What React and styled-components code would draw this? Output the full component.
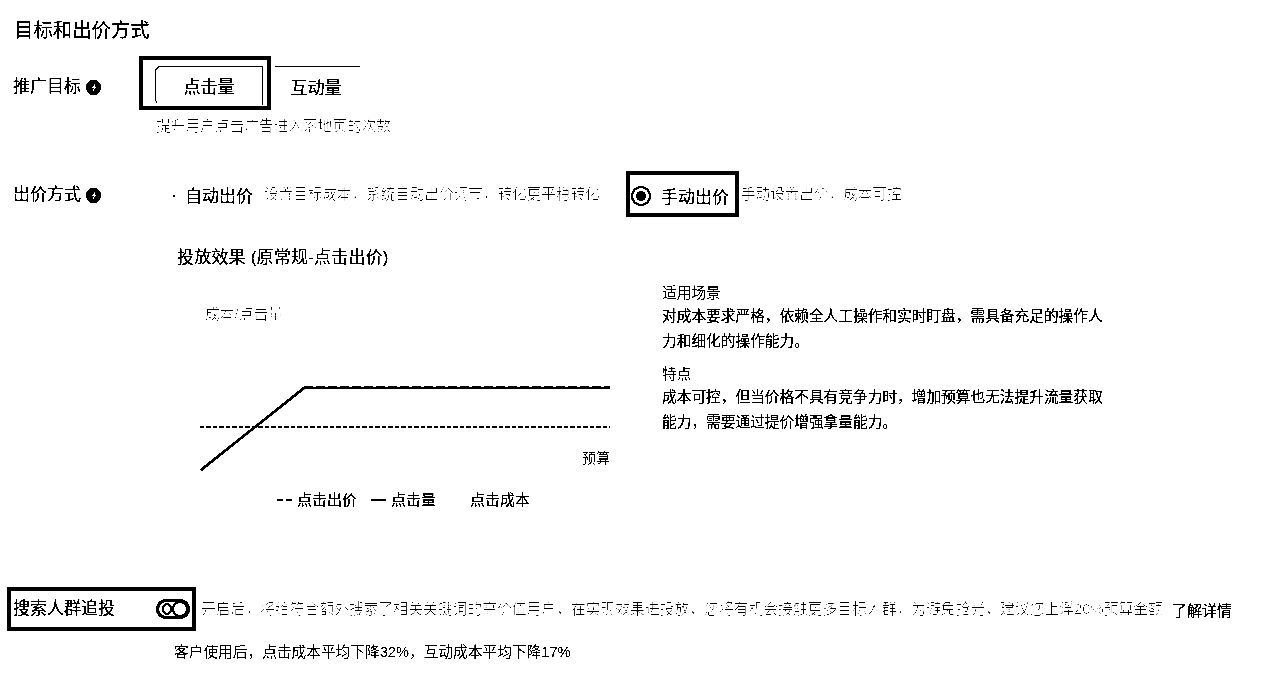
import React from 'react';
import styled, { createGlobalStyle } from 'styled-components';

const GlobalStyle = createGlobalStyle`
  html, body {
    margin: 0;
    padding: 0;
    background: #fff;
  }
  body {
    font-family: "Liberation Sans", "Noto Sans CJK SC", sans-serif;
    color: #000;
  }
`;

// the reference is a 1-bit scan, so push everything to black or white
const Page = styled.div`
  width: 1280px;
  height: 699px;
  box-sizing: border-box;
  padding-top: 18px;
  overflow: hidden;
  background: #fff;
  filter: grayscale(1) brightness(0.75) contrast(30);
`;

const Title = styled.h2`
  margin: 0 0 0 14px;
  font-size: 19.4px;
  font-weight: 400;
  line-height: 24px;
`;

const GoalRow = styled.div`
  display: flex;
  align-items: flex-start;
  margin-top: 14px;
  padding-left: 13px;
`;

const Label = styled.div`
  display: flex;
  align-items: center;
  gap: 5px;
  width: 126px;
  flex: none;
  font-size: 17px;
  line-height: 24px;
  padding-top: ${(p) => p.$top || 0}px;
`;

const InfoIcon = () => (
  <svg width="15" height="15" viewBox="0 0 15 15">
    <circle cx="7.5" cy="7.5" r="7.5" fill="#000" />
    <path d="M9.8 2.5 5.8 8h2L6.2 12.8 10.6 6.6H8.6z" fill="#fff" />
  </svg>
);

const Highlight = styled.div`
  box-sizing: border-box;
  border: 4px solid #000;
  flex: none;
`;

const TabHighlight = styled(Highlight)`
  width: 132px;
  height: 54px;
  padding: 6px 4px 1px 12px;
`;

const ActiveTab = styled.div`
  box-sizing: border-box;
  height: 39px;
  display: flex;
  align-items: center;
  justify-content: center;
  border: 1px solid #000;
  border-bottom-color: transparent;
  border-radius: 6px 0 0 6px;
  font-size: 17px;
`;

const Tab = styled.div`
  box-sizing: border-box;
  width: 85px;
  height: 39px;
  margin: 10px 0 0 4px;
  padding-right: 3px;
  display: flex;
  align-items: center;
  justify-content: center;
  border-top: 1px solid #000;
  font-size: 17px;
`;

const Helper = styled.div`
  margin: 6px 0 0 156px;
  font-size: 14.7px;
  line-height: 20px;
  color: #a3a3a3;
`;

const BidRow = styled.div`
  display: flex;
  align-items: center;
  margin-top: 35px;
  padding-left: 13px;
  height: 46px;
  white-space: nowrap;
`;

const RadioSpeck = styled.span`
  flex: none;
  width: 2px;
  height: 2px;
  margin: 3px 0 0 34px;
  background: #000;
`;

const AutoOption = styled.div`
  margin-left: 10px;
  font-size: 17px;
  width: 68px;
  flex: none;
`;

const Faint = styled.div`
  flex: none;
  font-size: ${(p) => p.$size || 14.6}px;
  color: #a3a3a3;
  margin-left: ${(p) => p.$left}px;
  width: ${(p) => (p.$width ? `${p.$width}px` : 'auto')};
  line-height: 20px;
`;

const BidHighlight = styled(Highlight)`
  width: 113px;
  height: 46px;
  display: flex;
  align-items: center;
  gap: 10px;
  padding: 3px 0 0 1px;
  font-size: 17px;
`;

const Radio = styled.span`
  box-sizing: border-box;
  width: 20px;
  height: 20px;
  flex: none;
  border: 2px solid #000;
  border-radius: 50%;
  display: flex;
  align-items: center;
  justify-content: center;
  &::after {
    content: '';
    width: 10px;
    height: 10px;
    border-radius: 50%;
    background: #000;
  }
`;

const EffectTitle = styled.div`
  margin: 29px 0 0 177px;
  font-size: 17px;
  font-weight: 400;
  letter-spacing: 0.2px;
  line-height: 24px;
`;

const ChartRow = styled.div`
  display: flex;
  align-items: flex-start;
  margin-top: 12px;
  padding-left: 200px;
`;

const ChartCol = styled.div`
  width: 410px;
  flex: none;
  padding-top: 18px;
`;

const ChartSvg = styled.svg`
  display: block;
`;

const Legend = styled.div`
  display: flex;
  margin: 8px 0 0 77px;
  font-size: 15px;
  line-height: 24px;
`;

const LegendItem = styled.div`
  display: flex;
  align-items: center;
  gap: 5px;
  margin-right: 14px;
`;

const Swatch = styled.span`
  width: 15px;
  height: 0;
  border-top: 2px ${(p) => p.$line} ${(p) => p.$color || '#000'};
`;

const Notes = styled.div`
  margin-left: 52px;
  width: 446px;
  font-size: 14.7px;
`;

const NoteHead = styled.div`
  line-height: 22px;
  margin-top: ${(p) => p.$top || 0}px;
  color: #555;
`;

const NoteBody = styled.p`
  margin: 0;
  line-height: 25px;
  font-weight: 400;
`;

const SearchRow = styled.div`
  display: flex;
  align-items: center;
  margin-top: 75px;
  padding-left: 7px;
  white-space: nowrap;
`;

const SearchHighlight = styled(Highlight)`
  width: 189px;
  height: 44px;
  display: flex;
  align-items: center;
  justify-content: space-between;
  padding: 0 2px 5px 2px;
  font-size: 17px;
`;

const Toggle = styled.span`
  box-sizing: border-box;
  position: relative;
  width: 34px;
  height: 20px;
  margin-top: 5px;
  border: 3px solid #000;
  border-radius: 10px;
  background: #fff;
  &::after {
    content: '';
    position: absolute;
    right: -1px;
    top: -1px;
    width: 16px;
    height: 16px;
    border-radius: 50%;
    border: 2px solid #000;
    box-sizing: border-box;
    background: #fff;
  }
  &::before {
    content: '';
    position: absolute;
    left: 3px;
    top: 1px;
    width: 10px;
    height: 12px;
    border-radius: 50%;
    border: 2px solid #000;
    box-sizing: border-box;
  }
`;

const MoreLink = styled.span`
  flex: none;
  margin-left: 10px;
  font-size: 15px;
`;

const Benefit = styled.div`
  margin: 11px 0 0 174px;
  font-size: 14.7px;
  line-height: 20px;
  color: #555;
`;

const BidChart = () => (
  <ChartSvg width="410" height="180" viewBox="0 0 410 180">
    <path d="M1 170 104 88H410" fill="none" stroke="#000" strokeWidth="2.5" />
    <path d="M104 87H410" fill="none" stroke="#000" strokeWidth="2" strokeDasharray="9 3" />
    <path d="M0 127H410" fill="none" stroke="#000" strokeWidth="2" strokeDasharray="4 2.5" />
    <text x="5" y="19" fontSize="14.8" fill="#a3a3a3">成本/点击量</text>
    <text x="382" y="163" fontSize="14" fill="#777">预算</text>
  </ChartSvg>
);

export default function App() {
  return (
    <Page>
      <GlobalStyle />
      <Title>目标和出价方式</Title>

      <GoalRow>
        <Label $top={19}>
          推广目标 <InfoIcon />
        </Label>
        <TabHighlight>
          <ActiveTab>点击量</ActiveTab>
        </TabHighlight>
        <Tab>互动量</Tab>
      </GoalRow>
      <Helper>提升用户点击广告进入落地页的次数</Helper>

      <BidRow>
        <Label $top={2}>
          出价方式 <InfoIcon />
        </Label>
        <RadioSpeck />
        <AutoOption>自动出价</AutoOption>
        <Faint $left={11} $width={362}>设置目标成本，系统自动出价调节，转化更平稳转化</Faint>
        <BidHighlight>
          <Radio />
          手动出价
        </BidHighlight>
        <Faint $left={2}>手动设置出价，成本可控</Faint>
      </BidRow>

      <EffectTitle>投放效果 (原常规-点击出价)</EffectTitle>

      <ChartRow>
        <ChartCol>
          <BidChart />
          <Legend>
            <LegendItem>
              <Swatch $line="dashed" />
              点击出价
            </LegendItem>
            <LegendItem>
              <Swatch $line="solid" />
              点击量
            </LegendItem>
            <LegendItem>
              <Swatch $line="solid" $color="#fff" />
              点击成本
            </LegendItem>
          </Legend>
        </ChartCol>
        <Notes>
          <NoteHead>适用场景</NoteHead>
          <NoteBody>对成本要求严格，依赖全人工操作和实时盯盘，需具备充足的操作人力和细化的操作能力。</NoteBody>
          <NoteHead $top={9}>特点</NoteHead>
          <NoteBody>成本可控，但当价格不具有竞争力时，增加预算也无法提升流量获取能力，需要通过提价增强拿量能力。</NoteBody>
        </Notes>
      </ChartRow>

      <SearchRow>
        <SearchHighlight>
          搜索人群追投
          <Toggle />
        </SearchHighlight>
        <Faint $left={5} $size={14.8} $width={961}>开启后，将给符合额外搜索了相关关键词的高价值用户，在实现效果进投放，您将有机会接触更多目标人群，为避免抢光，建议您上浮20%预算金额。</Faint>
        <MoreLink>了解详情</MoreLink>
      </SearchRow>
      <Benefit>客户使用后，点击成本平均下降32%，互动成本平均下降17%</Benefit>
    </Page>
  );
}
